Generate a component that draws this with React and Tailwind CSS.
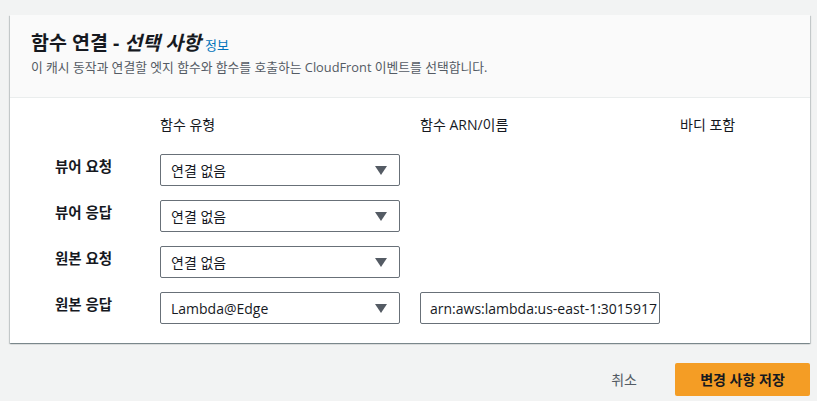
const font = { fontFamily: '"Open Sans", "Noto Sans CJK KR", sans-serif' };

const rows = [
  { label: '뷰어 요청', type: '연결 없음' },
  { label: '뷰어 응답', type: '연결 없음' },
  { label: '원본 요청', type: '연결 없음' },
  { label: '원본 응답', type: 'Lambda@Edge', arn: 'arn:aws:lambda:us-east-1:3015917' },
];

function SelectBox({ value }) {
  return (
    <div className="flex h-[32px] w-[240px] items-center justify-between rounded-[2px] border border-[#687078] bg-white pl-[10px] pr-[12px] text-[14px] text-[#16191f]">
      <span>{value}</span>
      <svg width="12" height="9" viewBox="0 0 12 9">
        <path d="M0 0 H12 L6 9 Z" fill="#545b64" />
      </svg>
    </div>
  );
}

export default function App() {
  return (
    <div className="min-h-[401px] w-[817px] bg-[#f2f3f3] pt-[15px]" style={font}>
      <div className="ml-[10px] w-[800px] bg-white shadow-[0_1px_1px_0_rgba(0,28,36,0.3),1px_1px_1px_0_rgba(0,28,36,0.15),-1px_1px_1px_0_rgba(0,28,36,0.15)]">
        {/* 헤더 */}
        <div className="h-[83px] border-b border-[#eaeded] bg-[#fafafa] pl-[21px] pt-[14px]">
          <div className="flex items-baseline gap-[4px]">
            <h2 className="text-[19.5px] font-bold leading-[27px] text-[#16191f]">
              함수 연결 - <i>선택 사항</i>
            </h2>
            <a className="text-[13px] text-[#0073bb]">정보</a>
          </div>
          <p className="mt-[2px] text-[12.8px] leading-[18px] text-[#545b64]">
            이 캐시 동작과 연결할 엣지 함수와 함수를 호출하는 CloudFront 이벤트를 선택합니다.
          </p>
        </div>

        {/* 본문 */}
        <div className="pb-[19px] pl-[45px] pt-[17px]">
          <div className="grid grid-cols-[105px_260px_260px_1fr] text-[14px] leading-[20px] text-[#16191f]">
            <div />
            <div>함수 유형</div>
            <div>함수 ARN/이름</div>
            <div>바디 포함</div>
          </div>
          <div className="mt-[19px] flex flex-col gap-[14px]">
            {rows.map((r) => (
              <div key={r.label} className="grid grid-cols-[105px_260px_260px_1fr] items-center">
                <div className="-mt-[6px] text-[14.5px] font-bold text-[#16191f]">{r.label}</div>
                <SelectBox value={r.type} />
                <div>
                  {r.arn && (
                    <div className="flex h-[32px] w-[240px] items-center overflow-hidden whitespace-nowrap rounded-[2px] border border-[#687078] bg-white pl-[9px] text-[14px] text-[#16191f]">
                      {r.arn}
                    </div>
                  )}
                </div>
                <div />
              </div>
            ))}
          </div>
        </div>
      </div>

      {/* 하단 버튼 */}
      <div className="mt-[20px] flex w-[810px] items-center justify-end gap-[38px]">
        <button className="text-[14px] text-[#545b64]">취소</button>
        <button className="h-[33px] w-[135px] rounded-[2px] bg-[#f49d25] text-[14px] font-bold text-[#16191f]">
          변경 사항 저장
        </button>
      </div>
    </div>
  );
}
